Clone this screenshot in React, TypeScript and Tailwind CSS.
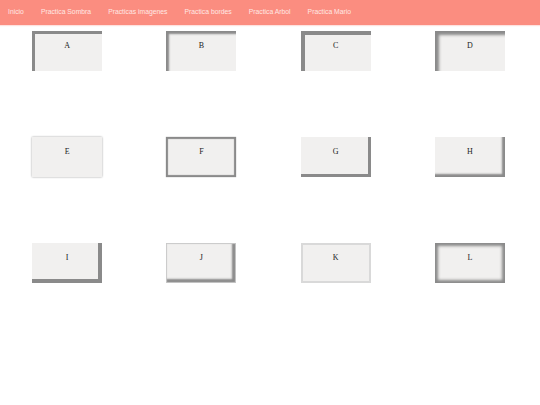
import React from "react";

const boxes: { label: string; cls: string }[] = [
  { label: "A", cls: "shadow-[inset_3px_3px_0_0_#8a8a8a]" },
  { label: "B", cls: "shadow-[inset_3px_3px_2px_0_#8a8a8a]" },
  { label: "C", cls: "shadow-[inset_4px_4px_0_0_#8a8a8a]" },
  { label: "D", cls: "shadow-[inset_4px_4px_3px_0_#8a8a8a]" },
  { label: "E", cls: "shadow-[0_0_2px_0_#a0a0a0]" },
  { label: "F", cls: "shadow-[inset_0_0_1px_2px_#8a8a8a,0_0_1px_0_#999]" },
  { label: "G", cls: "shadow-[inset_-3px_-3px_0_0_#8a8a8a]" },
  { label: "H", cls: "shadow-[inset_-3px_-3px_2px_0_#8a8a8a]" },
  { label: "I", cls: "shadow-[inset_-4px_-4px_0_0_#8a8a8a]" },
  { label: "J", cls: "shadow-[inset_0_0_1px_1px_#c8c8c8,inset_-4px_-4px_2px_0_#8a8a8a]" },
  { label: "K", cls: "shadow-[inset_0_0_0_2px_#d9d9d9]" },
  { label: "L", cls: "shadow-[inset_0_0_3px_3px_#8a8a8a]" },
];

const links = [
  "Inicio",
  "Practica Sombra",
  "Practicas imagenes",
  "Practica bordes",
  "Practica Arbol",
  "Practica Mario",
];

export default function App() {
  return (
    <div className="w-[540px] h-[405px] bg-white overflow-hidden">
      <nav className="h-[25px] bg-[#fb8d80] flex items-center pl-[8px] gap-[17px] shadow-[0_1px_1px_rgba(251,141,128,0.25)]">
        {links.map((l) => (
          <span
            key={l}
            className="text-[6.8px] leading-none text-[#ffe8e4] font-['Liberation_Sans',Arial,sans-serif]"
          >
            {l}
          </span>
        ))}
      </nav>
      <div className="grid grid-cols-4 gap-y-[66px] pt-[6px] pr-[3px]">
        {boxes.map((b) => (
          <div key={b.label} className="flex justify-center">
            <div
              className={`w-[70px] h-[40px] bg-[#f1f0ef] pt-[11px] text-center text-[8px] leading-[8px] text-[#222] font-['Liberation_Serif','Times_New_Roman',serif] ${b.cls}`}
            >
              {b.label}
            </div>
          </div>
        ))}
      </div>
    </div>
  );
}
